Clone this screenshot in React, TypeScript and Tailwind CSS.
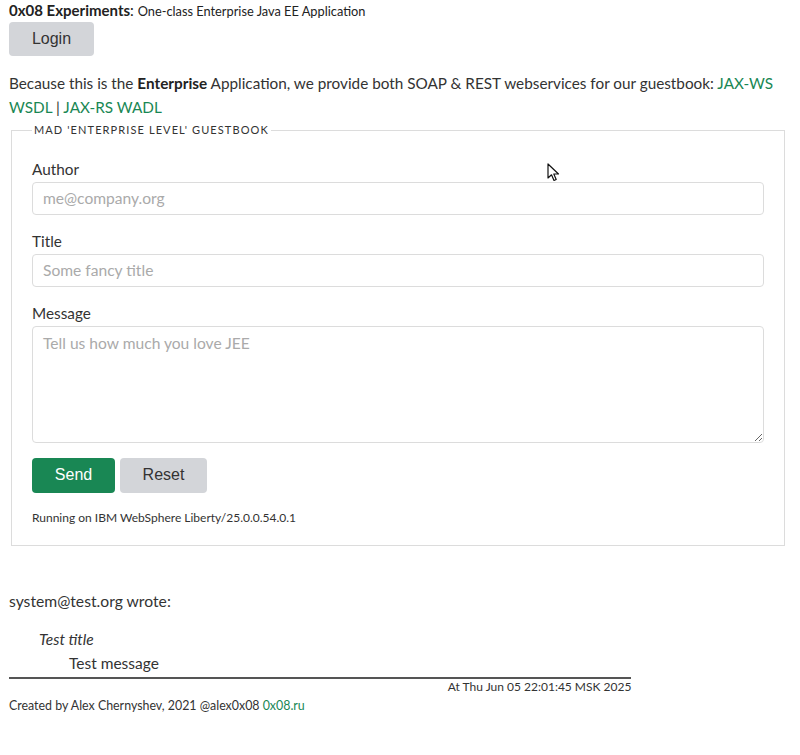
import React from 'react';

const font = "font-['Lato','Noto_Sans',sans-serif]";
const btnFont = "font-['Liberation_Sans',Arial,sans-serif]";

const Cursor: React.FC = () => (
    <svg className="absolute left-[547px] top-[163px]" width="14" height="20" viewBox="0 0 14 20">
        <path d="M1 1 L1 15 L4.5 11.8 L7 17.5 L9.2 16.5 L6.8 11 L11.5 11 Z" fill="#fff" stroke="#111" strokeWidth="1.2" strokeLinejoin="round" />
    </svg>
);

const inputCls = "mt-[1px] block h-[33px] w-full rounded-[4px] border border-[#dcdcdc] px-[10px] text-[15.6px] placeholder:text-[#aaa] outline-none";

export default function App() {
    return (
        <div className={`${font} relative min-h-[755px] bg-white text-[#333] pl-[9px] pr-[13px] pt-0`}>
            <div className="text-[#222] leading-[20px]">
                <span className="text-[15px] font-bold">0x08 Experiments</span>
                <span className="text-[15px]">: </span>
                <span className="text-[12.8px]">One-class Enterprise Java EE Application</span>
            </div>

            <button className={`${btnFont} mt-[1px] h-[34px] w-[85px] rounded-[4px] bg-[#d3d5d9] text-[16px] text-[#333]`}>
                Login
            </button>

            <p className="mt-[15px] text-[15.3px] leading-[24px]">
                Because this is the <b className="text-[#222]">Enterprise</b> Application, we provide both SOAP &amp; REST webservices for our guestbook:{' '}
                <a className="text-[#198754]"><span className="whitespace-nowrap">JAX-WS</span> WSDL</a> | <a className="text-[#198754]">JAX-RS WADL</a>
            </p>

            <fieldset className="mx-[2px] mt-[3px] border border-[#dcdcdc] px-[20px] pb-[18px]">
                <legend className="px-[2px] text-[11px] uppercase tracking-[1.1px] text-[#333]">Mad 'Enterprise level' guestbook</legend>

                <label className="mt-[18px] block text-[15.3px] leading-[24px]">Author</label>
                <input className={inputCls} placeholder="me@company.org" />

                <label className="mt-[14px] block text-[15.3px] leading-[24px]">Title</label>
                <input className={inputCls} placeholder="Some fancy title" />

                <label className="mt-[14px] block text-[15.3px] leading-[24px]">Message</label>
                <textarea className="mt-[1px] block h-[117px] w-full rounded-[4px] border border-[#dcdcdc] px-[10px] py-[5px] text-[15.6px] placeholder:text-[#aaa] outline-none" placeholder="Tell us how much you love JEE" />

                <div className="mt-[15px] flex gap-[5px]">
                    <button className={`${btnFont} h-[35px] w-[83px] rounded-[4px] bg-[#198754] text-[16px] text-white`}>Send</button>
                    <button className={`${btnFont} h-[35px] w-[87px] rounded-[4px] bg-[#d3d5d9] text-[16px] text-[#333]`}>Reset</button>
                </div>

                <div className="mt-[16px] text-[12px] leading-[18px]">Running on IBM WebSphere Liberty/25.0.0.54.0.1</div>
            </fieldset>

            <div className="mt-[43px] text-[15.7px] leading-[24px]">system@test.org wrote:</div>

            <div className="w-4/5">
                <div className="mt-[14px] pl-[30px] text-[15.5px] italic leading-[24px]">Test title</div>
                <div className="pl-[60px] text-[15.5px] leading-[24px] pb-[2px] border-b-2 border-[#555]">Test message</div>
                <div className="text-right text-[12px] leading-[16px]">At Thu Jun 05 22:01:45 MSK 2025</div>
            </div>

            <div className="mt-[2px] text-[12.4px] leading-[18px]">
                Created by Alex Chernyshev, 2021 @alex0x08 <a className="text-[#198754]">0x08.ru</a>
            </div>

            <Cursor />
        </div>
    );
}
